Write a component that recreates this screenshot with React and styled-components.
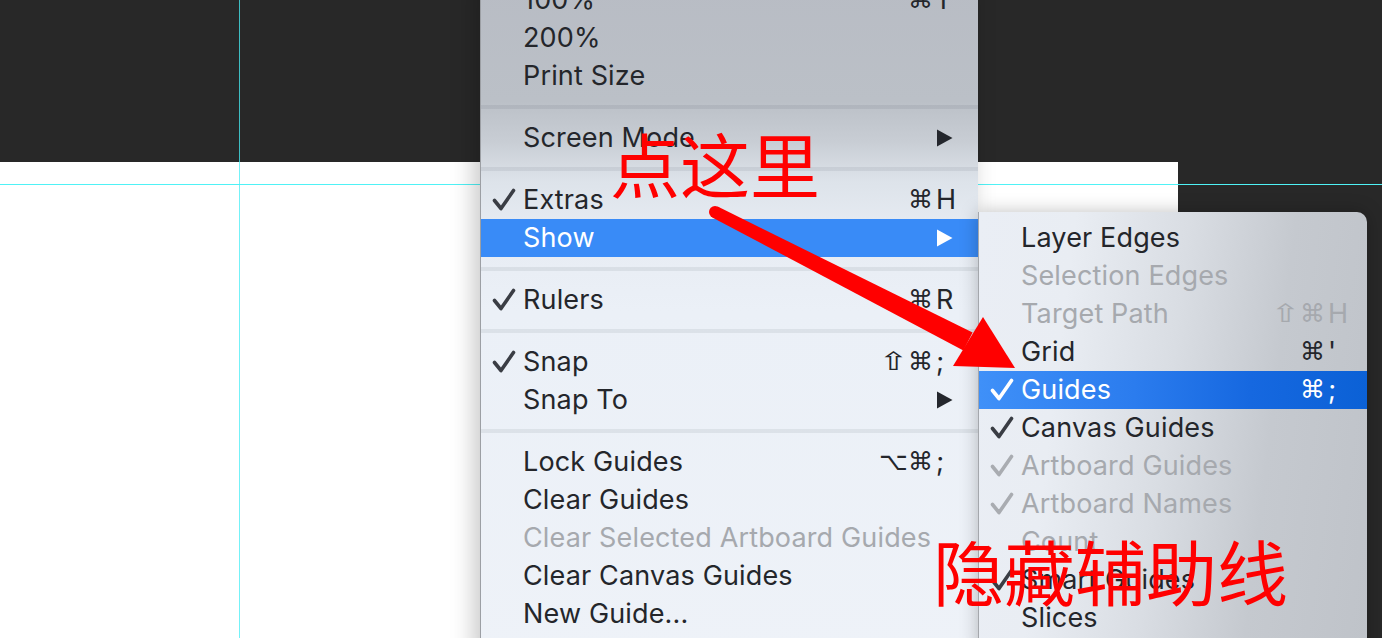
import React from 'react';
import styled, { createGlobalStyle, css } from 'styled-components';

const GlobalStyle = createGlobalStyle`
  html, body {
    margin: 0;
    padding: 0;
    background: #282828;
  }
  body {
    font-family: Inter, "Noto Sans", sans-serif;
    overflow: hidden;
  }
`;

const Page = styled.div`
  position: relative;
  width: 1382px;
  height: 638px;
  overflow: hidden;
  display: flex;
  flex-direction: column;
  background: #282828;
`;

const TopBar = styled.div`
  height: 162px;
  background: #282828;
`;

const Workspace = styled.div`
  flex: 1;
  display: flex;
`;

const Canvas = styled.div`
  width: 1178px;
  background: #ffffff;
`;

const Pasteboard = styled.div`
  flex: 1;
  background: #282828;
`;

const Guide = styled.div`
  position: absolute;
  background: ${({ $vertical }) => ($vertical ? 'rgba(70, 238, 245, 0.75)' : '#4ff2f6')};
  ${({ $vertical, $at }) =>
    $vertical
      ? css`
          left: ${$at}px;
          top: 0;
          bottom: 0;
          width: 1px;
        `
      : css`
          top: ${$at}px;
          left: 0;
          right: 0;
          height: 1px;
        `}
`;

const MainMenu = styled.div`
  position: absolute;
  left: 480px;
  top: -19px;
  width: 498px;
  height: 680px;
  display: flex;
  flex-direction: column;
  border-left: 1px solid #9c9fa4;
  box-sizing: border-box;
  background: linear-gradient(
    180deg,
    #b8bcc4 0px,
    #bbc0c7 120px,
    #c8cdd4 160px,
    #dde3ea 200px,
    #e7ecf3 250px,
    #ebf0f7 330px,
    #eef2f8 680px
  );
  box-shadow: -6px 0 22px rgba(0, 0, 0, 0.22);
`;

const SubMenu = styled.div`
  position: absolute;
  left: 978px;
  top: 212px;
  width: 389px;
  height: 440px;
  padding-top: 7px;
  box-sizing: border-box;
  display: flex;
  flex-direction: column;
  border-radius: 0 10px 0 0;
  border-left: 1px solid #a4a7ac;
  background: linear-gradient(
    97deg,
    #eaeef5 0%,
    #e9edf3 22%,
    #d9dde3 48%,
    #c5c9cf 72%,
    #bfc3c9 100%
  );
  box-shadow: 0 0 18px rgba(0, 0, 0, 0.25);
`;

const Item = styled.div`
  height: 38px;
  flex-shrink: 0;
  display: flex;
  align-items: center;
  padding-right: ${({ $sub }) => ($sub ? '15px' : '18px')};
  font-size: 27px;
  line-height: 36px;
  letter-spacing: 0.15px;
  color: ${({ $disabled }) => ($disabled ? '#a6a9ae' : '#24262b')};
  ${({ $active, $sub }) =>
    $active &&
    css`
      color: #ffffff;
      background: ${$sub
        ? 'linear-gradient(90deg, #3f90f8 0%, #2b7cee 40%, #1668e0 70%, #0b61d6 100%)'
        : '#398bf7'};
    `}
`;

const CheckCol = styled.span`
  width: 42px;
  flex-shrink: 0;
  display: flex;
  justify-content: center;
  padding-left: 3px;
  box-sizing: border-box;
`;

const Label = styled.span`
  flex: 1;
  white-space: nowrap;
`;

const Mods = styled.span`
  display: flex;
  margin-right: 2px;
`;

const ModGlyph = styled.span`
  width: 27px;
  display: flex;
  justify-content: center;
  font-family: "DejaVu Sans", sans-serif;
  font-size: 25px;
  transform: ${({ $wide }) => ($wide ? 'scaleX(1.45)' : 'none')};
`;

const Key = styled.span`
  width: 24px;
  font-size: 27px;
  display: flex;
  align-items: center;
`;

const Separator = styled.div`
  height: 24px;
  flex-shrink: 0;
  display: flex;
  align-items: center;

  &::after {
    content: '';
    flex: 1;
    height: 4px;
    background: rgba(40, 50, 70, 0.08);
  }
`;

const Note = styled.div`
  position: absolute;
  left: ${({ $x }) => $x}px;
  top: ${({ $y }) => $y}px;
  font-family: "Noto Sans CJK SC", sans-serif;
  font-size: ${({ $size }) => $size}px;
  line-height: 1;
  color: #ff0000;
  white-space: nowrap;
  pointer-events: none;
`;

const ArrowLayer = styled.svg`
  position: absolute;
  left: 0;
  top: 0;
  pointer-events: none;
`;

const Check = ({ color }) => (
  <svg width="24" height="24" viewBox="0 0 24 24">
    <path
      d="M2.5 12.5 L9 20.5 L21.5 2.5"
      fill="none"
      stroke={color}
      strokeWidth="3.6"
      strokeLinecap="round"
      strokeLinejoin="round"
    />
  </svg>
);

const SubArrow = ({ color }) => (
  <svg width="17" height="18" viewBox="0 0 17 18">
    <path d="M1 0.5 L16.5 9 L1 17.5 Z" fill={color} />
  </svg>
);

const mainItems = [
  { label: '100%', mods: ['⌘'], key: '1' },
  { label: '200%' },
  { label: 'Print Size' },
  { sep: true },
  { label: 'Screen Mode', submenu: true },
  { sep: true },
  { label: 'Extras', checked: true, mods: ['⌘'], key: 'H' },
  { label: 'Show', submenu: true, active: true },
  { sep: true },
  { label: 'Rulers', checked: true, mods: ['⌘'], key: 'R' },
  { sep: true },
  { label: 'Snap', checked: true, mods: ['⇧', '⌘'], key: ';' },
  { label: 'Snap To', submenu: true },
  { sep: true },
  { label: 'Lock Guides', mods: ['⌥', '⌘'], key: ';' },
  { label: 'Clear Guides' },
  { label: 'Clear Selected Artboard Guides', disabled: true },
  { label: 'Clear Canvas Guides' },
  { label: 'New Guide...' },
];

const showItems = [
  { label: 'Layer Edges' },
  { label: 'Selection Edges', disabled: true },
  { label: 'Target Path', disabled: true, mods: ['⇧', '⌘'], key: 'H' },
  { label: 'Grid', mods: ['⌘'], key: "'" },
  { label: 'Guides', checked: true, active: true, mods: ['⌘'], key: ';' },
  { label: 'Canvas Guides', checked: true },
  { label: 'Artboard Guides', checked: true, disabled: true },
  { label: 'Artboard Names', checked: true, disabled: true },
  { label: 'Count', disabled: true },
  { label: 'Smart Guides', checked: true },
  { label: 'Slices' },
];

const MenuRow = ({ item, sub }) => {
  if (item.sep) return <Separator />;
  const tint = item.active ? '#ffffff' : item.disabled ? '#a9acb1' : '#3a3d44';
  const hasRight = item.mods || item.submenu;
  return (
    <Item $active={item.active} $disabled={item.disabled} $sub={sub}>
      <CheckCol>{item.checked && <Check color={tint} />}</CheckCol>
      <Label>{item.label}</Label>
      {item.mods && (
        <Mods>
          {item.mods.map((m) => (
            <ModGlyph key={m} $wide={m === '⇧'}>
              {m}
            </ModGlyph>
          ))}
        </Mods>
      )}
      {hasRight && (
        <Key>{item.submenu ? <SubArrow color={item.active ? '#ffffff' : '#24272d'} /> : item.key}</Key>
      )}
    </Item>
  );
};

const App = () => (
  <>
    <GlobalStyle />
    <Page>
      <TopBar />
      <Workspace>
        <Canvas />
        <Pasteboard />
      </Workspace>
      <Guide $at={184} />
      <Guide $vertical $at={239} />

      <MainMenu>
        {mainItems.map((item, i) => (
          <MenuRow key={i} item={item} />
        ))}
      </MainMenu>

      <SubMenu>
        {showItems.map((item, i) => (
          <MenuRow key={i} item={item} sub />
        ))}
      </SubMenu>

      <ArrowLayer width="1382" height="638" viewBox="0 0 1382 638">
        <circle cx="715" cy="212" r="6" fill="#ff0000" />
        <polygon points="712.3,217.4 717.7,206.6 972.6,332.6 963.4,350.4" fill="#ff0000" />
        <polygon points="983,317 1015,368 953,366" fill="#ff0000" />
      </ArrowLayer>

      <Note $x={610} $y={128} $size={70}>点这里</Note>
      <Note $x={933} $y={534} $size={71}>隐藏辅助线</Note>
    </Page>
  </>
);

export default App;
